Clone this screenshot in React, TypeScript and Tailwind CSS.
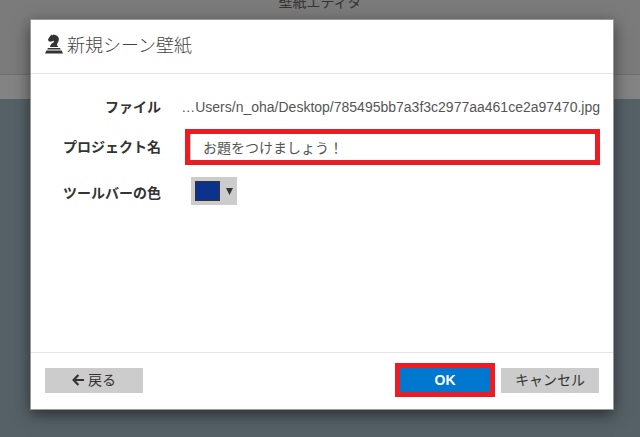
import React from "react";

const ChessKnightIcon = () => (
  <svg className="mb-1 h-5 w-[18px] shrink-0" viewBox="0 0 18 20" fill="#333" aria-hidden="true">
    <path d="M5 13C5 10.6 7 9.4 9 8L8.6 6.8L6 7.8L3.6 7.2L3 5.6L4.6 2.8L5.6 1.8L6 0.6L7.4 1.2L8.8 0.4L10 1C13.4 1.8 14.4 4.2 13.6 7C13 9 11.4 9.8 12.2 11.4L13.4 13Z" />
    <path d="M3 14H15L15.8 15.6H2.2Z" />
    <path d="M1.4 16.6H16.6L18 19.6H0Z" />
  </svg>
);

const BackArrowIcon = () => (
  <svg
    className="h-3 w-3"
    viewBox="0 0 12 12"
    fill="none"
    stroke="#333"
    strokeWidth="2.2"
    aria-hidden="true"
  >
    <path d="M6.4 1L1.6 6L6.4 11M1.8 6H12" />
  </svg>
);

const App = () => {
  const [projectName, setProjectName] = React.useState("お題をつけましょう！");

  return (
    <div className="relative flex min-h-screen flex-col bg-[#566167] font-['Liberation_Sans','Noto_Sans_CJK_JP',sans-serif] text-sm text-[#333]">
      {/* Page behind the dialog */}
      <header className="h-[75px] overflow-hidden border-b border-[#6e6e6e] bg-[#7b7b7b]">
        <h1 className="-mt-2 text-center text-sm leading-5">壁紙エディタ</h1>
      </header>
      <div className="h-6 bg-[#838383]" />

      {/* Dialog */}
      <div className="absolute inset-x-0 top-0 pt-[19px] pr-[26px] pl-[30px]">
        <div
          role="dialog"
          aria-labelledby="dialog-title"
          className="border border-[#999] bg-white shadow-[0_5px_15px_rgba(0,0,0,0.5)]"
        >
          <div className="flex items-center gap-1 border-b border-[#e5e5e5] px-3.5 pt-3 pb-[13px]">
            <ChessKnightIcon />
            <h2 id="dialog-title" className="text-lg leading-7 font-light text-[#444]">
              新規シーン壁紙
            </h2>
          </div>

          <form className="grid grid-cols-[116px_minmax(0,1fr)] items-center gap-x-6 pt-[15px] pr-[13px] pb-[139px] pl-3.5">
            <span className="py-2 text-right leading-5 font-bold">ファイル</span>
            <span className="flex justify-end leading-5 whitespace-nowrap text-[#555]">
              …Users/n_oha/Desktop/785495bb7a3f3c2977aa461ce2a97470.jpg
            </span>

            <label htmlFor="project-name" className="text-right leading-5 font-bold">
              プロジェクト名
            </label>
            <div className="my-1 border-[5px] border-[#ed1c24]">
              <input
                id="project-name"
                type="text"
                value={projectName}
                onChange={(e) => setProjectName(e.target.value)}
                className="block h-[26px] w-full border-l border-[#ccc] px-3 text-[#555] outline-none"
              />
            </div>

            <span id="color-label" className="pt-1 text-right leading-5 font-bold">
              ツールバーの色
            </span>
            <div className="py-2 pl-1.5">
              <button
                type="button"
                aria-labelledby="color-label"
                className="flex h-7 items-center gap-1.5 bg-[#ccc] px-1"
              >
                <span className="h-5 w-[25px] border border-[#333] bg-[#0b338c]" />
                <svg className="h-[7px] w-[7px]" viewBox="0 0 7 7" fill="#333" aria-hidden="true">
                  <path d="M0 0H7L3.5 7Z" />
                </svg>
              </button>
            </div>
          </form>

          <div className="flex items-center justify-between border-t border-[#e5e5e5] px-3.5 pt-2.5 pb-3">
            <button
              type="button"
              className="flex h-[25px] w-[98px] items-center justify-center gap-1 bg-[#ccc]"
            >
              <BackArrowIcon />
              戻る
            </button>
            <div className="flex items-center gap-1.5">
              <div className="border-[5px] border-[#ed1c24]">
                <button type="button" className="block h-6 w-[90px] bg-[#0078d0] font-bold text-white">
                  OK
                </button>
              </div>
              <button type="button" className="h-[25px] w-[98px] bg-[#ccc]">
                キャンセル
              </button>
            </div>
          </div>
        </div>
      </div>
    </div>
  );
};

export default App;
